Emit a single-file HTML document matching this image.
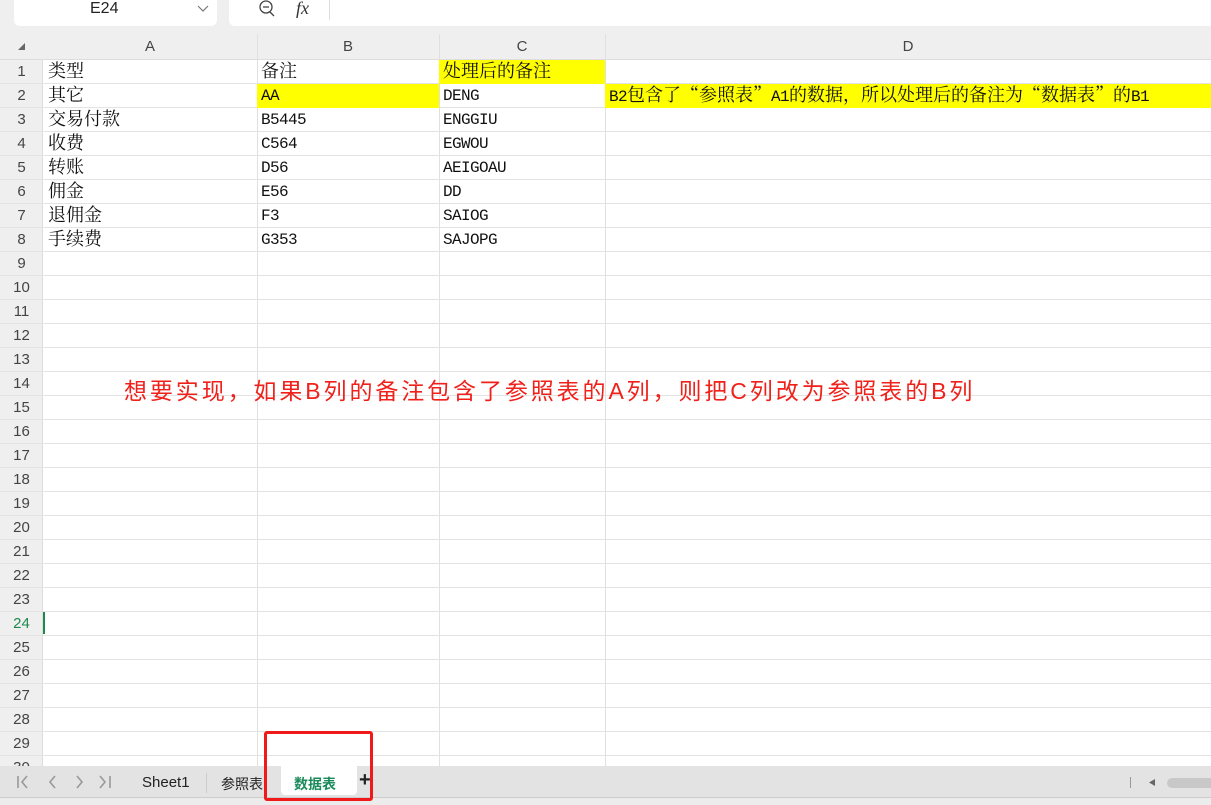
<!DOCTYPE html><html><head><meta charset="utf-8"><style>
*{margin:0;padding:0;box-sizing:border-box}
body{width:1211px;height:805px;overflow:hidden;background:#fff;position:relative;font-family:"Liberation Sans","Noto Sans CJK SC",sans-serif}
.a{position:absolute}
.c{position:absolute;font-family:"Noto Serif CJK SC",serif;font-size:18px;line-height:24px;color:#111;padding-left:4px;white-space:nowrap;margin-top:-2px}
.c.l{margin-top:0}
.c.l,.c .l{font-family:"Liberation Mono",monospace;font-size:16px;letter-spacing:-0.6px}
.rn{position:absolute;left:0;width:43px;text-align:center;font-size:15px;color:#444;line-height:24px}
</style></head><body>
<div class="a" style="left:0;top:0;width:1211px;height:34px;background:#efefef"></div>
<div class="a" style="left:14px;top:-6px;width:203px;height:32px;background:#fff;border-radius:6px"></div>
<div class="a" style="left:90px;top:0;font-size:16px;color:#222">E24</div>
<svg class="a" style="left:197px;top:5px" width="12" height="8"><polyline points="1,1 6,6 11,1" fill="none" stroke="#777" stroke-width="1.2"/></svg>
<div class="a" style="left:229px;top:-6px;width:990px;height:32px;background:#fff;border-radius:6px"></div>
<svg class="a" style="left:256px;top:0" width="22" height="20"><circle cx="10" cy="7" r="6" fill="none" stroke="#444" stroke-width="1.3"/><line x1="7" y1="7" x2="13" y2="7" stroke="#444" stroke-width="1.3"/><line x1="14" y1="12" x2="18" y2="16" stroke="#444" stroke-width="1.3"/></svg>
<div class="a" style="left:296px;top:-2px;font-family:'Liberation Serif',serif;font-style:italic;font-size:18px;color:#333">fx</div>
<div class="a" style="left:329px;top:0;width:1px;height:20px;background:#ddd"></div>
<div class="a" style="left:0;top:34px;width:1211px;height:26px;background:#efefef;border-bottom:1px solid #ddd"></div>
<div class="a" style="left:0;top:60px;width:43px;height:706px;background:#efefef;border-right:1px solid #ddd"></div>
<svg class="a" style="left:17px;top:42px" width="10" height="10"><polygon points="8,1 8,8 1,8" fill="#666"/></svg>
<div class="a" style="left:43px;top:34px;width:214px;text-align:center;line-height:26px;font-size:15px;color:#444">A</div>
<div class="a" style="left:257px;top:34px;width:182px;text-align:center;line-height:26px;font-size:15px;color:#444">B</div>
<div class="a" style="left:439px;top:34px;width:166px;text-align:center;line-height:26px;font-size:15px;color:#444">C</div>
<div class="a" style="left:605px;top:34px;width:606px;text-align:center;line-height:26px;font-size:15px;color:#444">D</div>
<div id="g"></div>
<div class="a" style="left:439px;top:60px;width:166px;height:24px;background:#ffff00"></div>
<div class="a" style="left:257px;top:84px;width:182px;height:24px;background:#ffff00"></div>
<div class="a" style="left:605px;top:84px;width:606px;height:24px;background:#ffff00"></div>
<script>
var h='';
for(var x of [257,439,605])h+='<div class="a" style="left:'+x+'px;top:34px;width:1px;height:732px;background:#e0e0e0"></div>';
for(var i=1;i<=30;i++){var t=60+24*(i-1);h+='<div class="a" style="left:0;top:'+(t+23)+'px;width:1211px;height:1px;background:#e3e3e3"></div>';
h+='<div class="rn" style="top:'+t+'px;'+(i==24?'color:#1f8a4c;':'')+'">'+i+'</div>';}
document.getElementById('g').innerHTML=h;
</script>
<div class="a" style="left:43px;top:612px;width:2px;height:22px;background:#1f8a4c"></div>
<div class="c" style="left:44px;top:60px">类型</div><div class="c" style="left:257px;top:60px">备注</div><div class="c" style="left:439px;top:60px">处理后的备注</div>
<div class="c" style="left:44px;top:84px">其它</div><div class="c l" style="left:257px;top:84px">AA</div><div class="c l" style="left:439px;top:84px">DENG</div><div class="c" style="left:605px;top:84px"><span class="l">B2</span>包含了“参照表”<span class="l">A1</span>的数据，所以处理后的备注为“数据表”的<span class="l">B1</span></div>
<div class="c" style="left:44px;top:108px">交易付款</div><div class="c l" style="left:257px;top:108px">B5445</div><div class="c l" style="left:439px;top:108px">ENGGIU</div>
<div class="c" style="left:44px;top:132px">收费</div><div class="c l" style="left:257px;top:132px">C564</div><div class="c l" style="left:439px;top:132px">EGWOU</div>
<div class="c" style="left:44px;top:156px">转账</div><div class="c l" style="left:257px;top:156px">D56</div><div class="c l" style="left:439px;top:156px">AEIGOAU</div>
<div class="c" style="left:44px;top:180px">佣金</div><div class="c l" style="left:257px;top:180px">E56</div><div class="c l" style="left:439px;top:180px">DD</div>
<div class="c" style="left:44px;top:204px">退佣金</div><div class="c l" style="left:257px;top:204px">F3</div><div class="c l" style="left:439px;top:204px">SAIOG</div>
<div class="c" style="left:44px;top:228px">手续费</div><div class="c l" style="left:257px;top:228px">G353</div><div class="c l" style="left:439px;top:228px">SAJOPG</div>
<div class="a" style="left:124px;top:372px;font-size:23px;letter-spacing:2.9px;color:#f0201a;white-space:nowrap">想要实现，如果B列的备注包含了参照表的A列，则把C列改为参照表的B列</div>
<div class="a" style="left:0;top:766px;width:1211px;height:31px;background:#e3e3e3"></div>
<div class="a" style="left:0;top:797px;width:1211px;height:8px;background:#ececec;border-top:1px solid #ccc"></div>
<svg class="a" style="left:14px;top:772px" width="100" height="20" fill="none" stroke="#999" stroke-width="1.6">
<line x1="4" y1="4" x2="4" y2="16"/><polyline points="13,4 8,10 13,16"/>
<polyline points="41,4 36,10 41,16"/>
<polyline points="63,4 68,10 63,16"/>
<polyline points="86,4 91,10 86,16"/><line x1="96" y1="4" x2="96" y2="16"/></svg>
<div class="a" style="left:142px;top:774px;font-size:15px;color:#222">Sheet1</div>
<div class="a" style="left:206px;top:773px;width:1px;height:20px;background:#ccc"></div>
<div class="a" style="left:221px;top:774px;font-size:14px;color:#222">参照表</div>
<div class="a" style="left:281px;top:766px;width:76px;height:29px;background:#fff;border-radius:0 0 4px 4px"></div>
<div class="a" style="left:294px;top:774px;font-size:14px;font-weight:bold;color:#1a8a5a">数据表</div>
<div class="a" style="left:359px;top:769px;font-size:20px;font-weight:bold;color:#222">+</div>
<div class="a" style="left:264px;top:731px;width:109px;height:70px;border:3px solid #f01a1a;border-radius:3px"></div>
<div class="a" style="left:1130px;top:777px;width:1px;height:11px;background:#999"></div>
<svg class="a" style="left:1148px;top:779px" width="8" height="8"><polygon points="7,0 7,7 1,3.5" fill="#666"/></svg>
<div class="a" style="left:1167px;top:778px;width:60px;height:10px;background:#c8c8c8;border-radius:5px"></div>
</body></html>
